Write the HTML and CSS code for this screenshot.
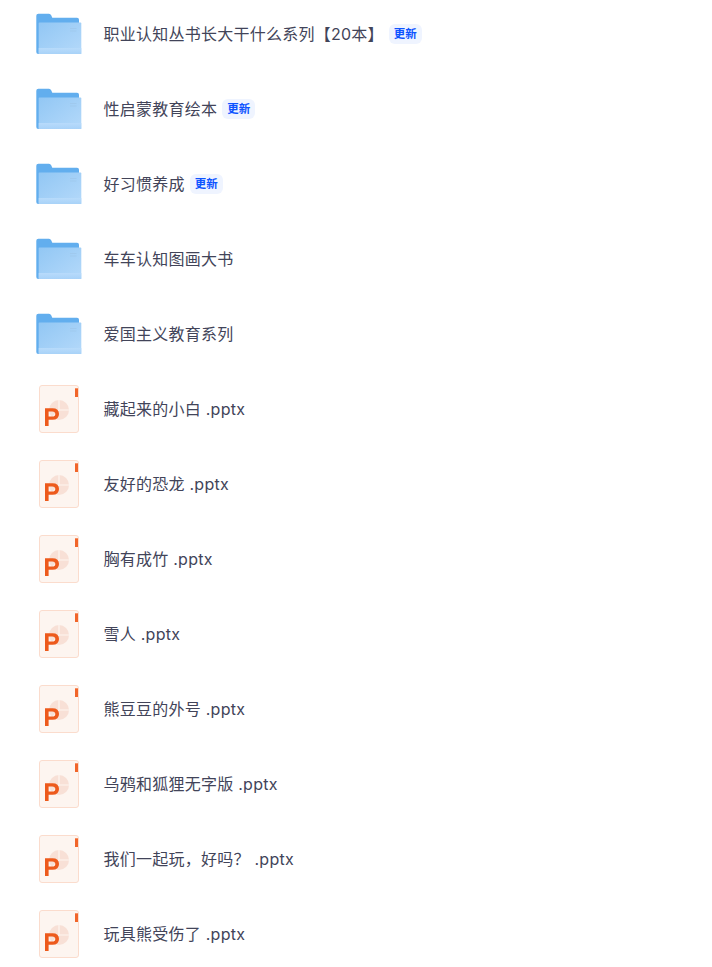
FILE: index.html
```html
<!DOCTYPE html>
<html lang="zh">
<head>
<meta charset="utf-8">
<title>文件列表</title>
<link rel="stylesheet" href="styles.css">
</head>
<body>
<svg class="defs" width="0" height="0" aria-hidden="true">
  <defs>
    <linearGradient id="fg" x1="0" y1="0" x2="1" y2="1">
      <stop offset="0" stop-color="#92c7f4"/>
      <stop offset="1" stop-color="#b4d9fa"/>
    </linearGradient>
    <linearGradient id="band" x1="0" y1="0" x2="0" y2="1">
      <stop offset="0" stop-color="#b8dbfb"/>
      <stop offset="1" stop-color="#a8d2f8"/>
    </linearGradient>
    <symbol id="folder" viewBox="0 0 48 43">
      <path d="M1.300 2.700Q1.300 .7 3.300 .7H14Q15.500 .7 16.200 2.200L17.300 4.700H42Q44 4.700 44 6.700V41H3.300Q1.300 41 1.300 39Z" fill="#62aeee"/>
      <rect x="3.700" y="9.600" width="42.600" height="31.400" rx=".8" fill="url(#fg)"/>
      <rect x="3.700" y="35" width="42.600" height="6" fill="url(#band)"/>
      <rect x="35" y="15" width="6.500" height="1" fill="#9fc9ee"/>
      <rect x="35" y="17.500" width="6.500" height="1" fill="#9fc9ee"/>
    </symbol>
    <symbol id="ppt" viewBox="0 0 42 49">
      <rect x="1.500" y=".5" width="39" height="47" rx="2.500" fill="#fdf5f0" stroke="#fbdccd"/>
      <rect x="37" y="3.300" width="3" height="8.700" fill="#f1652a"/>
      <circle cx="21" cy="25" r="10" fill="#f8e0d6"/>
      <path d="M21 15V25H31M21 25L15 32" fill="none" stroke="#fdf5f0" stroke-width="1.200"/>
      <path d="M7 41V23.300H14.500Q21 23.300 21 29T14.500 34.800H10.600V41ZM10.600 26.500V31.600H14Q17.300 31.600 17.300 29T14 26.500Z" fill="#ed5a1c"/>
    </symbol>
  </defs>
</svg>
<ul class="list">
  <li class="row"><svg class="folder"><use href="#folder"/></svg><span class="name">职业认知丛书长大干什么系列【20本】</span><span class="tag">更新</span></li>
  <li class="row"><svg class="folder"><use href="#folder"/></svg><span class="name">性启蒙教育绘本</span><span class="tag">更新</span></li>
  <li class="row"><svg class="folder"><use href="#folder"/></svg><span class="name">好习惯养成</span><span class="tag">更新</span></li>
  <li class="row"><svg class="folder"><use href="#folder"/></svg><span class="name">车车认知图画大书</span></li>
  <li class="row"><svg class="folder"><use href="#folder"/></svg><span class="name">爱国主义教育系列</span></li>
  <li class="row"><svg class="file"><use href="#ppt"/></svg><span class="name">藏起来的小白 .pptx</span></li>
  <li class="row"><svg class="file"><use href="#ppt"/></svg><span class="name">友好的恐龙 .pptx</span></li>
  <li class="row"><svg class="file"><use href="#ppt"/></svg><span class="name">胸有成竹 .pptx</span></li>
  <li class="row"><svg class="file"><use href="#ppt"/></svg><span class="name">雪人 .pptx</span></li>
  <li class="row"><svg class="file"><use href="#ppt"/></svg><span class="name">熊豆豆的外号 .pptx</span></li>
  <li class="row"><svg class="file"><use href="#ppt"/></svg><span class="name">乌鸦和狐狸无字版 .pptx</span></li>
  <li class="row"><svg class="file"><use href="#ppt"/></svg><span class="name">我们一起玩，好吗？ .pptx</span></li>
  <li class="row"><svg class="file"><use href="#ppt"/></svg><span class="name">玩具熊受伤了 .pptx</span></li>
</ul>
</body>
</html>
```
FILE: styles.css
```css
html, body {
  margin: 0;
  padding: 0;
  background: #fff;
  height: 967px;
  overflow: hidden;
}
.defs {
  display: block;
  height: 0;
}
.list {
  list-style: none;
  margin: -3px 0 0;
  padding: 0 0 0 35px;
  font-family: "Inter", "Noto Sans CJK SC", sans-serif;
  font-size: 16px;
  letter-spacing: 0.25px;
  color: #424459;
}
.row {
  display: flex;
  align-items: center;
  height: 75px;
}
.folder {
  width: 48px;
  height: 43px;
  margin-right: 21px;
}
.file {
  width: 42px;
  height: 49px;
  margin: 0 24px 0 3px;
}
.name {
  white-space: nowrap;
  line-height: 24px;
  margin: 0 0 1px -0.5px;
}
.tag {
  margin: 0 0 1px 5px;
  padding: 0 5px;
  height: 20px;
  line-height: 20px;
  border-radius: 6px;
  background: #eff4ff;
  color: #0d53ff;
  font-size: 11.5px;
  font-weight: 700;
  letter-spacing: 0;
}
```
